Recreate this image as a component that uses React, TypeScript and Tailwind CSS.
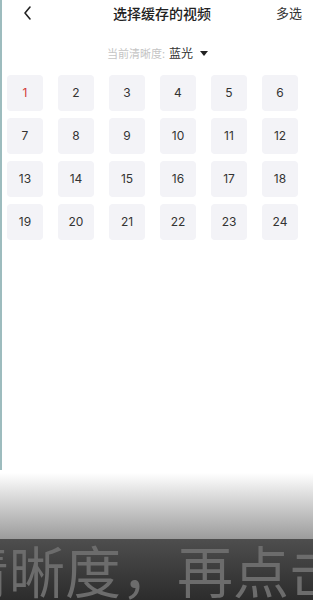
import React from 'react';

const nums = Array.from({ length: 24 }, (_, i) => i + 1);

export default function App() {
  return (
    <div
      className="relative flex h-[600px] w-[313px] flex-col overflow-hidden bg-white"
      style={{ fontFamily: '"Noto Sans CJK SC", "Noto Sans", sans-serif' }}
    >
      {/* left edge line */}
      <div className="absolute left-0 top-0 h-[470px] w-[2px] bg-[#9dbcbe]" />

      {/* Header */}
      <div className="flex h-[26px] items-center justify-between pl-[22px] pr-[11px]">
        <svg width="12" height="16" viewBox="0 0 12 16" className="mt-[-1px]">
          <path d="M8 2 L3 8 L8 14" fill="none" stroke="#222" strokeWidth="1.6" strokeLinecap="round" strokeLinejoin="round" />
        </svg>
        <h1 className="ml-[14px] text-[14px] font-medium text-[#222]">选择缓存的视频</h1>
        <span className="text-[13px] text-[#333]">多选</span>
      </div>

      {/* Quality selector */}
      <div className="mt-[17px] flex h-[20px] items-center justify-center pl-[2px] text-[11px]">
        <span className="text-[#c4c4c4]">当前清晰度:</span>
        <span className="ml-[4px] text-[12px] text-[#333]">蓝光</span>
        <svg width="8" height="5" viewBox="0 0 8 5" className="ml-[7px]">
          <path d="M0 0 L8 0 L4 5 Z" fill="#222" />
        </svg>
      </div>

      {/* Episodes */}
      <div className="mt-[12px] grid grid-cols-[repeat(6,36px)] gap-x-[15px] gap-y-[7px] pl-[7px]">
        {nums.map((n) => (
          <div
            key={n}
            className={`flex h-[36px] w-[36px] items-center justify-center rounded-[4px] bg-[#f3f3f7] text-[12px] ${
              n === 1 ? 'text-[#d23a3a]' : 'text-[#333]'
            }`}
            style={{ fontFamily: 'Inter, "Noto Sans", sans-serif' }}
          >
            {n}
          </div>
        ))}
      </div>

      <div className="flex-1" />

      {/* Bottom fade */}
      <div className="h-[66px] bg-gradient-to-b from-white to-[#9c9c9c]" />
      <div className="h-[61px] overflow-hidden bg-gradient-to-b from-[#4e4e4e] to-[#2c2c2c]">
        <div className="ml-[-47px] mt-[2px] whitespace-nowrap text-[56px] leading-none text-[#6c6c6c]">
          清晰度，再点击
        </div>
      </div>
    </div>
  );
}
